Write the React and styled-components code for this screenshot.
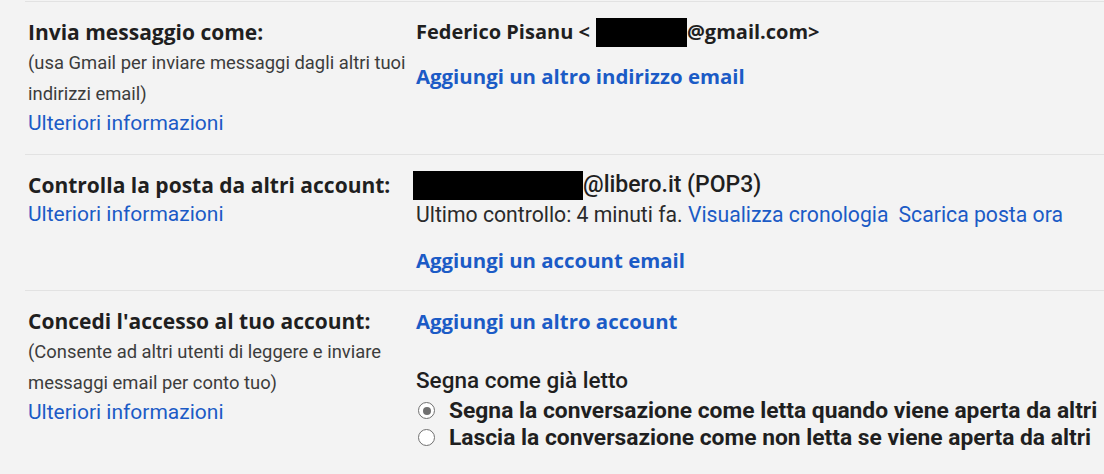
import React from 'react'
import styled, { createGlobalStyle } from 'styled-components'

const GlobalStyle = createGlobalStyle`
    body {
        margin: 0;
        background: #f3f3f3;
        font-family: Roboto, "Liberation Sans", sans-serif;
        color: #1f1f1f;
    }
`

function App() {
    return (
        <Page>
            <GlobalStyle />
            <Table>
                <Row>
                    <Label>
                        <Title>Invia messaggio come:</Title>
                        <Note>(usa Gmail per inviare messaggi dagli altri tuoi indirizzi email)</Note>
                        <Link>Ulteriori informazioni</Link>
                    </Label>
                    <Value>
                        <Strong>
                            Federico Pisanu &lt;<Redacted w={91} left={6} />@gmail.com&gt;
                        </Strong>
                        <Action top={15}>Aggiungi un altro indirizzo email</Action>
                    </Value>
                </Row>
                <Row>
                    <Label>
                        <Title>Controlla la posta da altri account:</Title>
                        <Link>Ulteriori informazioni</Link>
                    </Label>
                    <Value>
                        <Account>
                            <Redacted w={170} left={-3} />@libero.it (POP3)
                        </Account>
                        <Plain>
                            Ultimo controllo: 4 minuti fa.&nbsp;<InlineLink>Visualizza cronologia</InlineLink>
                            <InlineLink gap={10}>Scarica posta ora</InlineLink>
                        </Plain>
                        <Action top={17}>Aggiungi un account email</Action>
                    </Value>
                </Row>
                <Row>
                    <Label>
                        <Title>Concedi l'accesso al tuo account:</Title>
                        <Note>(Consente ad altri utenti di leggere e inviare messaggi email per conto tuo)</Note>
                        <Link>Ulteriori informazioni</Link>
                    </Label>
                    <Value>
                        <Action top={1}>Aggiungi un altro account</Action>
                        <Group>
                            <Subtitle>Segna come già letto</Subtitle>
                            <Option>
                                <Radio checked />
                                <span>Segna la conversazione come letta quando viene aperta da altri</span>
                            </Option>
                            <Option>
                                <Radio />
                                <span>Lascia la conversazione come non letta se viene aperta da altri</span>
                            </Option>
                        </Group>
                    </Value>
                </Row>
            </Table>
        </Page>
    )
}

const Page = styled.div`
    min-height: 474px;
    background: #f3f3f3;
    padding-top: 1px;
    overflow: hidden;
`

const Table = styled.div`
    display: flex;
    flex-direction: column;
`

const Row = styled.div`
    display: grid;
    grid-template-columns: 391px 1fr;
    border-top: 1px solid #e2e2e2;
    margin-left: 25px;
    padding: 15px 0 16px;
`

const Label = styled.div`
    padding-left: 3px;
    display: flex;
    flex-direction: column;
    align-items: flex-start;
`

const Title = styled.div`
    font-family: "Open Sans", Roboto, sans-serif;
    font-size: 21px;
    font-weight: 700;
    line-height: 30px;
    color: #1f1f1f;
    white-space: nowrap;
`

const Note = styled.div`
    font-size: 18.4px;
    line-height: 31px;
    color: #3c3c3c;
    width: 386px;
`

const Link = styled.span`
    font-size: 21px;
    line-height: 29px;
    color: #1b5bc6;
    cursor: pointer;
`

const InlineLink = styled.span`
    color: #1b5bc6;
    margin-left: ${p => p.gap || 0}px;
    cursor: pointer;
`

const Value = styled.div`
    display: flex;
    flex-direction: column;
    align-items: flex-start;
`

const Strong = styled.div`
    font-family: "Open Sans", Roboto, sans-serif;
    font-size: 20px;
    font-weight: 700;
    line-height: 30px;
    display: flex;
    align-items: center;
    white-space: nowrap;
`

const Account = styled.div`
    font-size: 23px;
    font-weight: 500;
    line-height: 30px;
    display: flex;
    align-items: center;
    white-space: nowrap;
`

const Plain = styled.div`
    font-size: 21.2px;
    line-height: 29px;
    color: #2a2a2a;
    display: flex;
    align-items: center;
    white-space: nowrap;
`

const Subtitle = styled.div`
    font-size: 22.5px;
    font-weight: 500;
    line-height: 29px;
    margin-bottom: 2px;
    color: #1f1f1f;
`

const Redacted = styled.span`
    display: inline-block;
    width: ${p => p.w}px;
    height: 29px;
    margin-left: ${p => p.left || 0}px;
    background: #000;
`

const Action = styled.span`
    margin-top: ${p => p.top || 0}px;
    font-family: "Open Sans", Roboto, sans-serif;
    font-size: 20.4px;
    font-weight: 700;
    line-height: 28px;
    color: #1b5bc6;
    cursor: pointer;
    white-space: nowrap;
`

const Group = styled.div`
    margin-top: 31px;
    display: flex;
    flex-direction: column;
`

const Option = styled.label`
    display: flex;
    align-items: center;
    gap: 14px;
    margin-left: 2px;
    font-size: 22.8px;
    font-weight: 700;
    line-height: 27px;
    white-space: nowrap;
`

const Radio = styled.span`
    width: 15px;
    height: 15px;
    border-radius: 50%;
    border: 1.5px solid #707070;
    background: #fff;
    box-sizing: content-box;
    flex: none;
    position: relative;
    ${p => p.checked && `
        &::after {
            content: '';
            position: absolute;
            inset: 3.5px;
            border-radius: 50%;
            background: #707070;
        }
    `}
`

export default App
